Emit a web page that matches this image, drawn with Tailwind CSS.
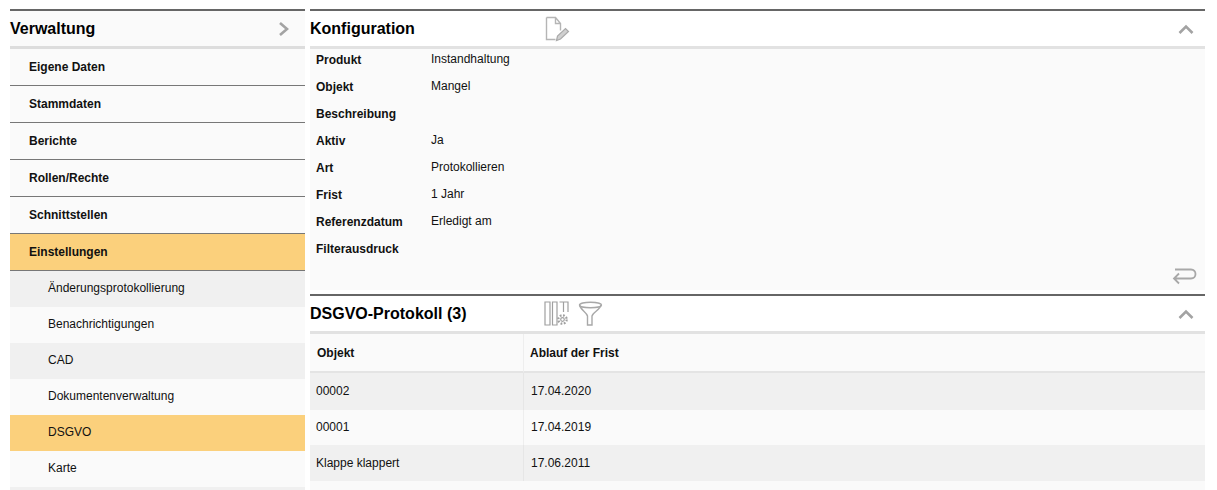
<!DOCTYPE html>
<html lang="de">
<head>
<meta charset="UTF-8">
<title>DSGVO</title>
<script src="https://cdn.jsdelivr.net/npm/@tailwindcss/browser@4"></script>
</head>
<body class="bg-white font-['Liberation_Sans',Arial,sans-serif] text-[12px] text-[#111] overflow-hidden">
<div class="flex h-[490px] overflow-hidden pl-[10px] pr-[12px] pt-[9px] gap-[5px]">

  <!-- linke Spalte -->
  <div class="w-[295px] shrink-0 bg-[#fafafa]">
    <div class="h-[40px] border-t-2 border-[#666] border-b-[3px] border-b-[#ddd] flex items-center justify-between pr-[15px]">
      <span class="text-[16px] font-bold text-black">Verwaltung</span>
      <svg width="12" height="16" viewBox="0 0 12 16" fill="none" stroke="#a3a3a3" stroke-width="2.6"><path d="M2 2l7 6-7 6"/></svg>
    </div>
    <div class="h-[37px] pl-[19px] flex items-center font-bold border-b border-[#777]">Eigene Daten</div>
    <div class="h-[37px] pl-[19px] flex items-center font-bold border-b border-[#777]">Stammdaten</div>
    <div class="h-[37px] pl-[19px] flex items-center font-bold border-b border-[#777]">Berichte</div>
    <div class="h-[37px] pl-[19px] flex items-center font-bold border-b border-[#777]">Rollen/Rechte</div>
    <div class="h-[37px] pl-[19px] flex items-center font-bold border-b border-[#777]">Schnittstellen</div>
    <div class="h-[37px] pl-[19px] flex items-center font-bold border-b border-[#777] bg-[#fbd07c]">Einstellungen</div>
    <div class="h-[36px] pl-[38px] pb-[2px] flex items-center bg-[#f0f0f0]">Änderungsprotokollierung</div>
    <div class="h-[36px] pl-[38px] pb-[2px] flex items-center">Benachrichtigungen</div>
    <div class="h-[36px] pl-[38px] pb-[2px] flex items-center bg-[#f0f0f0]">CAD</div>
    <div class="h-[36px] pl-[38px] pb-[2px] flex items-center">Dokumentenverwaltung</div>
    <div class="h-[36px] pl-[38px] pb-[2px] flex items-center bg-[#fbd07c]">DSGVO</div>
    <div class="h-[36px] pl-[38px] pb-[2px] flex items-center">Karte</div>
    <div class="h-[36px] bg-[#f0f0f0]"></div>
  </div>

  <!-- rechte Spalte -->
  <div class="flex-1 min-w-0">
    <div class="border-t-2 border-[#666] border-b-[3px] border-b-[#e2e2e2] h-[40px] flex items-center">
      <span class="text-[16px] font-bold text-black w-[234px]">Konfiguration</span>
      <svg class="mt-[1px]" width="26" height="26" viewBox="0 0 26 26" fill="none" stroke="#b5b5b5" stroke-width="1.4"><path d="M2.500 1.500h9l5 6v7M2.500 1.500v22h9M11.500 1.500v6h5"/><path d="M12.500 24.500l1-4.500 8-7.500 3 3-8 7.500z" fill="#d0d0d0" stroke="#aaa" stroke-width="1.200"/></svg>
      <svg class="ml-auto mr-[11px]" width="16" height="10" viewBox="0 0 16 10" fill="none" stroke="#a3a3a3" stroke-width="2.6"><path d="M1.5 9L8 2.5 14.5 9"/></svg>
    </div>
    <div class="h-[241px] bg-[#fafafa] pl-[6px] relative flex flex-col">
      <div class="-mt-[3px] flex flex-col">
        <div class="h-[27px] flex items-center"><span class="w-[115px] font-bold">Produkt</span><span class="-mt-[2px]">Instandhaltung</span></div>
        <div class="h-[27px] flex items-center"><span class="w-[115px] font-bold">Objekt</span><span class="-mt-[2px]">Mangel</span></div>
        <div class="h-[27px] flex items-center"><span class="w-[115px] font-bold">Beschreibung</span></div>
        <div class="h-[27px] flex items-center"><span class="w-[115px] font-bold">Aktiv</span><span class="-mt-[2px]">Ja</span></div>
        <div class="h-[27px] flex items-center"><span class="w-[115px] font-bold">Art</span><span class="-mt-[2px]">Protokollieren</span></div>
        <div class="h-[27px] flex items-center"><span class="w-[115px] font-bold">Frist</span><span class="-mt-[2px]">1 Jahr</span></div>
        <div class="h-[27px] flex items-center"><span class="w-[115px] font-bold">Referenzdatum</span><span class="-mt-[2px]">Erledigt am</span></div>
        <div class="h-[27px] flex items-center"><span class="w-[115px] font-bold">Filterausdruck</span></div>
      </div>
      <svg class="absolute right-[8px] bottom-[4px]" width="26" height="19" viewBox="0 0 26 19" fill="none" stroke="#a8a8a8" stroke-width="1.8"><path d="M4 2.500h16c6 0 6 9 0 9H3M8 6.500l-5 5 5 5"/></svg>
    </div>
    <div class="mt-[4px] border-t-2 border-[#666] border-b-[3px] border-b-[#e2e2e2] h-[40px] flex items-center">
      <span class="text-[16px] font-bold text-black w-[234px]">DSGVO-Protokoll (3)</span>
      <svg width="25" height="25" viewBox="0 0 25 25" fill="none" stroke="#a0a0a0" stroke-width="1.2"><path d="M1 1h5v23H1zM8.500 1h4.500v23H8.500zM15.500 1h4v10M19.500 1h4.500v10"/><circle cx="18.500" cy="18.500" r="1.800"/><circle cx="18.500" cy="18.500" r="4.200" stroke-dasharray="1.800 1.500" stroke-width="2.200"/></svg>
      <svg class="ml-[9px]" width="25" height="25" viewBox="0 0 25 25" fill="none" stroke="#a8a8a8" stroke-width="1.4"><ellipse cx="12.500" cy="4" rx="11" ry="2.800"/><path d="M1.500 4c1 5 7 7 8 11v9h4.500v-9c1-4 8-6 9-11"/></svg>
      <svg class="ml-auto mr-[11px]" width="16" height="10" viewBox="0 0 16 10" fill="none" stroke="#a3a3a3" stroke-width="2.6"><path d="M1.5 9L8 2.5 14.5 9"/></svg>
    </div>
    <div class="grid grid-cols-[214px_1fr]">
      <div class="h-[39px] bg-[#fafafa] border-b-2 border-[#e4e4e4] border-r border-r-[#eee] pl-[7px] flex items-center font-bold">Objekt</div>
      <div class="h-[39px] bg-[#fafafa] border-b-2 border-[#e4e4e4] pl-[6px] flex items-center font-bold">Ablauf der Frist</div>
      <div class="h-[37px] bg-[#f0f0f0] border-r border-r-[#e6e6e6] pl-[6px] pb-[2px] flex items-center">00002</div>
      <div class="h-[37px] bg-[#f0f0f0] pl-[7px] pb-[2px] flex items-center">17.04.2020</div>
      <div class="h-[35px] bg-[#fafafa] border-r border-r-[#eee] pl-[6px] pb-[2px] flex items-center">00001</div>
      <div class="h-[35px] bg-[#fafafa] pl-[7px] pb-[2px] flex items-center">17.04.2019</div>
      <div class="h-[36px] bg-[#f0f0f0] border-r border-r-[#e6e6e6] pl-[6px] flex items-center">Klappe klappert</div>
      <div class="h-[36px] bg-[#f0f0f0] pl-[7px] flex items-center">17.06.2011</div>
      <div class="col-span-2 h-[9px] bg-[#fafafa]"></div>
    </div>
  </div>
</div>
</body>
</html>
